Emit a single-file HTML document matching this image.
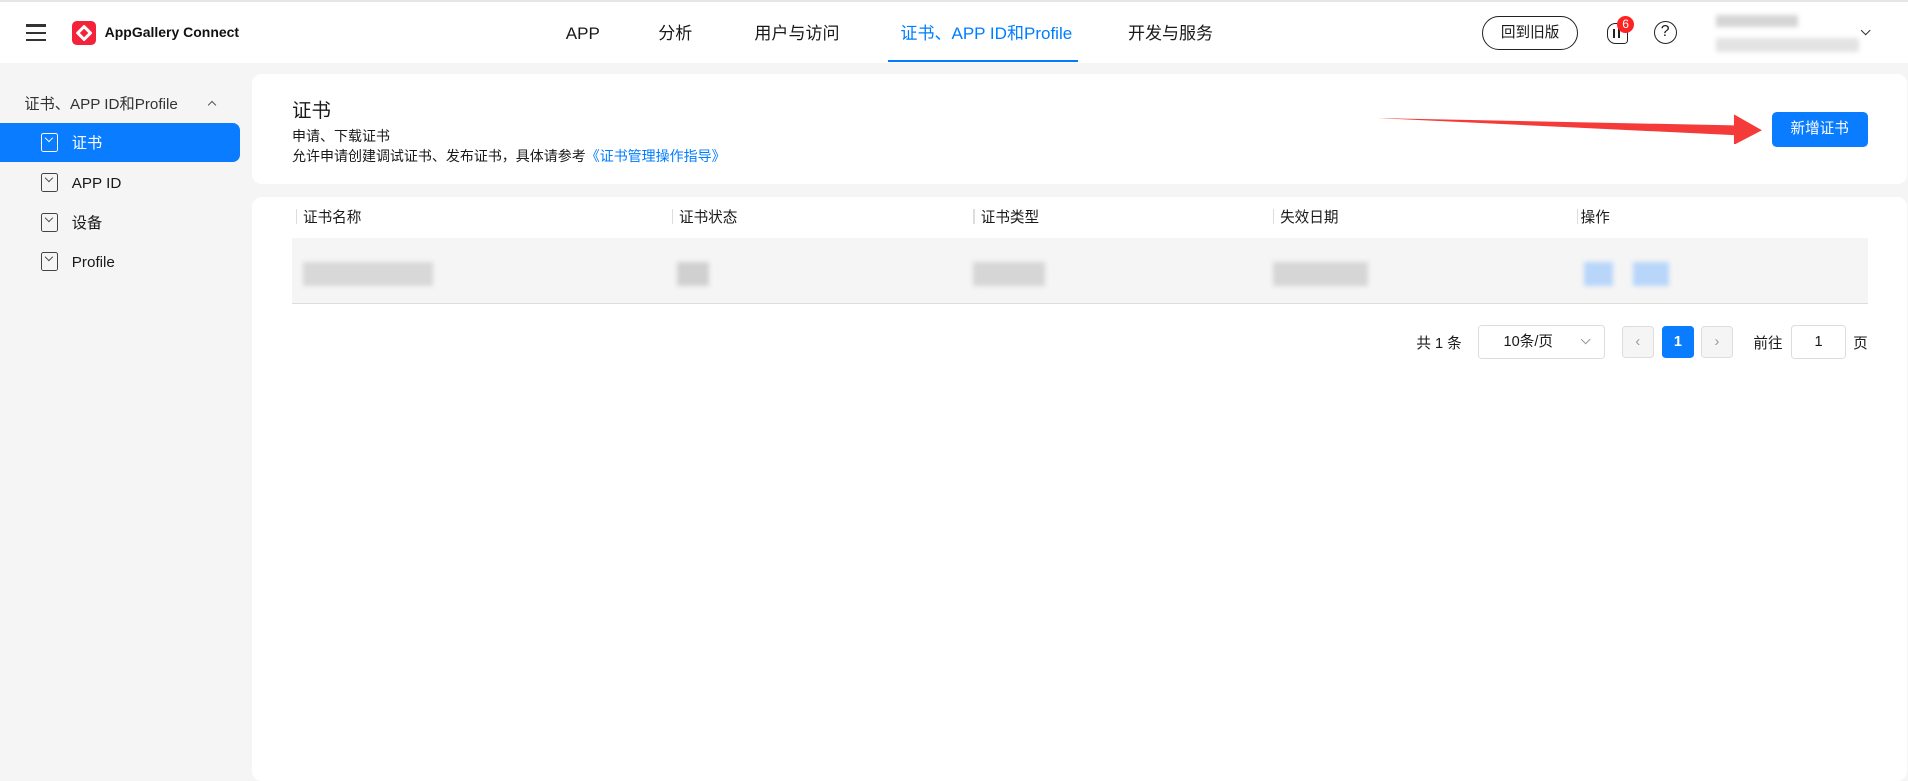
<!DOCTYPE html>
<html><head><meta charset="utf-8"><style>
html{zoom:1.2168}
*{box-sizing:border-box;margin:0;padding:0}
body{width:1568px;height:635px;overflow:hidden;background:#f5f5f5;font-family:"Liberation Sans","Noto Sans CJK SC",sans-serif;color:#191919;position:relative;font-size:12px;line-height:16px}
.a{position:absolute}
.hdr{left:0;top:0;width:1568px;height:52px;background:#fff;border-top:2px solid #e6e6e6}
.nav{top:18px;font-size:14px;line-height:20px;color:#191919;white-space:nowrap}
.blur{background:#ddd;filter:blur(2px)}
.side{font-size:12.5px;line-height:16px}
.ico{width:14px;height:16px;border:1.2px solid #444;border-radius:2px}
.ico:after{content:"";position:absolute;left:3px;top:1px;width:4px;height:4px;border-right:1px solid #444;border-bottom:1px solid #444;transform:rotate(45deg)}
.ico.w{border-color:#fff}.ico.w:after{border-color:#fff}
.card{background:#fff;border-radius:8px}
.th{top:172px;font-size:12px}
.sep{top:172px;width:1px;height:12px;background:#ddd}
.pg{border:1px solid #ddd;border-radius:3px;background:#f5f5f5}
</style></head><body>
<div class="a hdr"></div>
<div class="a" style="left:21px;top:20px;width:17px;height:2px;background:#333"></div>
<div class="a" style="left:21px;top:26px;width:17px;height:2px;background:#333"></div>
<div class="a" style="left:21px;top:32px;width:17px;height:2px;background:#333"></div>
<div class="a" style="left:59px;top:17px;width:20px;height:20px;background:#f3243a;border-radius:4px"></div>
<div class="a" style="left:64px;top:22px;width:10px;height:10px;border:2.5px solid #fff;transform:rotate(45deg);border-radius:1px"></div>
<div class="a" style="left:86px;top:19px;font-size:11.5px;font-weight:bold;color:#111">AppGallery Connect</div>
<div class="a nav" style="left:465px">APP</div>
<div class="a nav" style="left:541px">分析</div>
<div class="a nav" style="left:620px">用户与访问</div>
<div class="a nav" style="left:740px;color:#007dff">证书、APP ID和Profile</div>
<div class="a" style="left:730px;top:49px;width:156px;height:2px;background:#007dff"></div>
<div class="a nav" style="left:927px">开发与服务</div>
<div class="a" style="left:1218px;top:13px;width:79px;height:28px;border:1px solid #222;border-radius:14px;font-size:12px;text-align:center;line-height:27px">回到旧版</div>
<div class="a" style="left:1321px;top:19px;width:17px;height:17px;border:1.5px solid #222;border-radius:7px 7px 3px 7px"></div>
<div class="a" style="left:1326px;top:24px;width:1.5px;height:7px;background:#222"></div>
<div class="a" style="left:1330px;top:22px;width:1.5px;height:9px;background:#222"></div>
<div class="a" style="left:1329px;top:13px;width:14px;height:14px;border-radius:7px;background:#f22;color:#fff;font-size:10px;text-align:center;line-height:14px">6</div>
<div class="a" style="left:1359px;top:17px;width:19px;height:19px;border:1.5px solid #222;border-radius:50%;text-align:center;font-size:13px;line-height:16px">?</div>
<div class="a blur" style="left:1410px;top:12px;width:68px;height:10px;background:#d5d5d5"></div>
<div class="a blur" style="left:1410px;top:31px;width:118px;height:12px;background:#e3e3e3"></div>
<div class="a" style="left:1530px;top:22px;width:6px;height:6px;border-right:1px solid #333;border-bottom:1px solid #333;transform:rotate(45deg)"></div>

<div class="a side" style="left:20px;top:78px;color:#333">证书、APP ID和Profile</div>
<div class="a" style="left:172px;top:84px;width:5px;height:5px;border-left:1px solid #555;border-top:1px solid #555;transform:rotate(45deg)"></div>
<div class="a" style="left:0;top:101px;width:197px;height:32px;background:#0a7cff;border-radius:0 6px 6px 0"></div>
<div class="a ico w" style="left:34px;top:109px"></div>
<div class="a side" style="left:59px;top:110px;color:#fff">证书</div>
<div class="a ico" style="left:34px;top:142px"></div><div class="a side" style="left:59px;top:143px">APP ID</div>
<div class="a ico" style="left:34px;top:175px"></div><div class="a side" style="left:59px;top:176px">设备</div>
<div class="a ico" style="left:34px;top:207px"></div><div class="a side" style="left:59px;top:208px">Profile</div>

<div class="a card" style="left:207px;top:61px;width:1360px;height:90px"></div>
<div class="a" style="left:240px;top:81px;font-size:16px;line-height:20px">证书</div>
<div class="a" style="left:240px;top:104px;font-size:11.5px">申请、下载证书</div>
<div class="a" style="left:240px;top:121px;font-size:11.5px">允许申请创建调试证书、发布证书，具体请参考<span style="color:#007dff">《证书管理操作指导》</span></div>
<svg class="a" style="left:1130px;top:92px" width="320" height="26"><polygon points="2,5 295,11 295,2 318,15 295,27 295,19" fill="#f53a3a"/></svg>
<div class="a" style="left:1456px;top:92px;width:79px;height:29px;background:#0a7cff;border-radius:4px;color:#fff;text-align:center;line-height:29px;font-size:12px">新增证书</div>

<div class="a card" style="left:207px;top:162px;width:1360px;height:480px"></div>
<div class="a sep" style="left:243px"></div><div class="a th" style="left:249px">证书名称</div>
<div class="a sep" style="left:552px"></div><div class="a th" style="left:558px">证书状态</div>
<div class="a sep" style="left:800px"></div><div class="a th" style="left:806px">证书类型</div>
<div class="a sep" style="left:1046px"></div><div class="a th" style="left:1052px">失效日期</div>
<div class="a sep" style="left:1296px"></div><div class="a th" style="left:1299px">操作</div>
<div class="a" style="left:240px;top:196px;width:1295px;height:54px;background:#f5f5f5;border-bottom:1px solid #ddd"></div>
<div class="a blur" style="left:249px;top:215px;width:107px;height:20px;background:#d8d8d8"></div>
<div class="a blur" style="left:556px;top:215px;width:27px;height:20px;background:#d0d0d0"></div>
<div class="a blur" style="left:800px;top:215px;width:59px;height:20px;background:#d6d6d6"></div>
<div class="a blur" style="left:1046px;top:215px;width:78px;height:20px;background:#d6d6d6"></div>
<div class="a blur" style="left:1302px;top:215px;width:24px;height:20px;background:#b8d6fa"></div>
<div class="a blur" style="left:1342px;top:215px;width:30px;height:20px;background:#b8d6fa"></div>

<div class="a" style="left:1164px;top:275px;font-size:12px">共 1 条</div>
<div class="a" style="left:1215px;top:267px;width:104px;height:28px;border:1px solid #ddd;border-radius:3px;text-align:center;line-height:27px;font-size:12px;padding-right:22px">10条/页</div>
<div class="a" style="left:1300px;top:276px;width:6px;height:6px;border-right:1px solid #999;border-bottom:1px solid #999;transform:rotate(45deg)"></div>
<div class="a pg" style="left:1333px;top:268px;width:26px;height:26px;color:#999;text-align:center;line-height:25px">‹</div>
<div class="a" style="left:1366px;top:268px;width:26px;height:26px;background:#0a7cff;border-radius:3px;color:#fff;text-align:center;line-height:27px;font-weight:bold">1</div>
<div class="a pg" style="left:1398px;top:268px;width:26px;height:26px;color:#999;text-align:center;line-height:25px">›</div>
<div class="a" style="left:1441px;top:275px;font-size:12px">前往</div>
<div class="a" style="left:1472px;top:267px;width:45px;height:28px;border:1px solid #ddd;border-radius:3px;text-align:center;line-height:27px">1</div>
<div class="a" style="left:1523px;top:275px;font-size:12px">页</div>
</body></html>
